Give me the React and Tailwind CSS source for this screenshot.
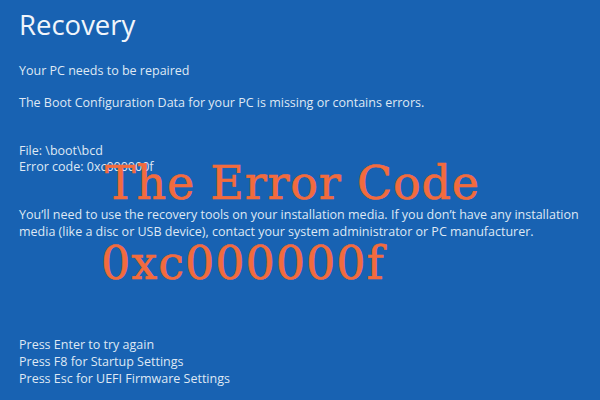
export default function App() {
  const body = { fontFamily: '"Open Sans", "Noto Sans", sans-serif' };
  const serif = { fontFamily: '"DejaVu Serif", serif' };
  return (
    <div className="relative w-[600px] h-[400px] overflow-hidden bg-[#1862b2] text-[#dfe8f4]" style={body}>
      <div className="flex flex-col pl-[19px] pt-[9px] text-[12.5px] leading-[17px]">
        <div className="text-[27.5px] leading-[32px] text-[#f1f5fb]">Recovery</div>
        <div className="mt-[21px]">Your PC needs to be repaired</div>
        <div className="mt-[15px]">The Boot Configuration Data for your PC is missing or contains errors.</div>
        <div className="mt-[32px] leading-[16px]">File: \boot\bcd</div>
        <div className="leading-[16px]">Error code: 0xc000000f</div>
        <div className="mt-[31px]">You’ll need to use the recovery tools on your installation media. If you don’t have any installation</div>
        <div>media (like a disc or USB device), contact your system administrator or PC manufacturer.</div>
        <div className="mt-[96px]">Press Enter to try again</div>
        <div>Press F8 for Startup Settings</div>
        <div>Press Esc for UEFI Firmware Settings</div>
      </div>
      <div className="absolute left-[105px] top-[158px] text-[46px] leading-[50px] text-[#f26b3d] tracking-[0.8px] [-webkit-text-stroke:0.6px_#f26b3d]" style={serif}>The Error Code</div>
      <div className="absolute left-[101px] top-[238px] text-[46px] leading-[50px] text-[#f26b3d] tracking-[1px] [-webkit-text-stroke:0.6px_#f26b3d]" style={serif}>0xc000000f</div>
    </div>
  );
}
